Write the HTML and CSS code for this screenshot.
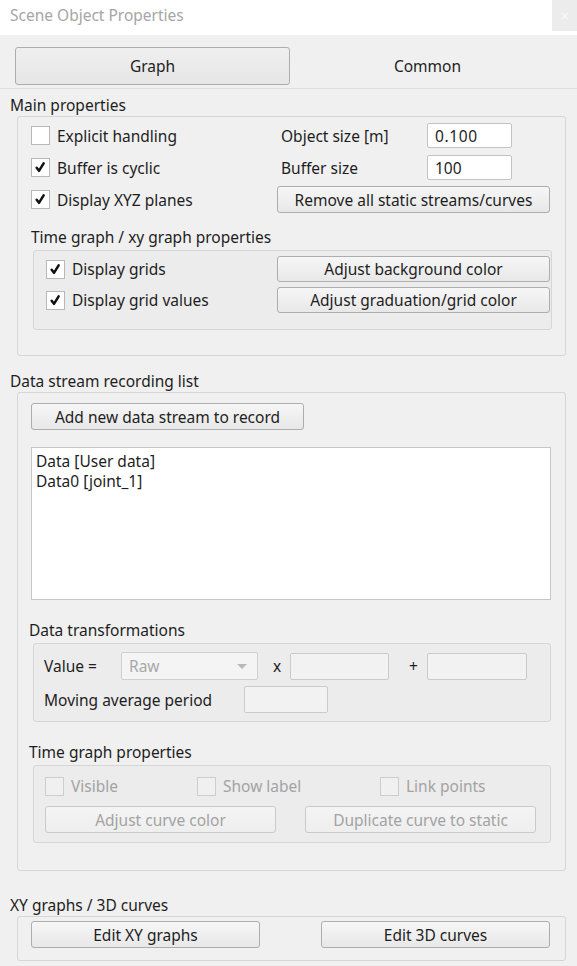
FILE: index.html
```html
<!DOCTYPE html>
<html lang="en">
<head>
<meta charset="utf-8">
<title>Scene Object Properties</title>
<link rel="stylesheet" href="styles.css">
</head>
<body>
<div class="dialog">
  <header class="titlebar">
    <span class="title">Scene Object Properties</span>
    <span class="close">✕</span>
  </header>

  <nav class="tabs">
    <div class="tab active">Graph</div>
    <div class="tab">Common</div>
  </nav>

  <main class="page">
    <div class="section-title first">Main properties</div>
    <section class="group main-props">
      <div class="prop-grid">
        <label class="check"><span class="box"></span>Explicit handling</label>
        <div class="field"><span class="field-label">Object size [m]</span><input class="edit w85 size-value" value="0.100"></div>

        <label class="check"><span class="box"><svg class="tick" viewBox="0 0 19 19" width="17" height="17"><path d="M5.2 9.8 L7.8 13.2 L13 4.8"/></svg></span>Buffer is cyclic</label>
        <div class="field"><span class="field-label">Buffer size</span><input class="edit w85" value="100"></div>

        <label class="check"><span class="box"><svg class="tick" viewBox="0 0 19 19" width="17" height="17"><path d="M5.2 9.8 L7.8 13.2 L13 4.8"/></svg></span>Display XYZ planes</label>
        <button class="btn w273">Remove all static streams/curves</button>
      </div>

      <div class="sub-title">Time graph / xy graph properties</div>
      <div class="group nested graph-props">
        <label class="check"><span class="box"><svg class="tick" viewBox="0 0 19 19" width="17" height="17"><path d="M5.2 9.8 L7.8 13.2 L13 4.8"/></svg></span>Display grids</label>
        <button class="btn w273">Adjust background color</button>
        <label class="check"><span class="box"><svg class="tick" viewBox="0 0 19 19" width="17" height="17"><path d="M5.2 9.8 L7.8 13.2 L13 4.8"/></svg></span>Display grid values</label>
        <button class="btn w273">Adjust graduation/grid color</button>
      </div>
    </section>

    <div class="section-title">Data stream recording list</div>
    <section class="group stream-list">
      <button class="btn w273">Add new data stream to record</button>
      <ul class="list">
        <li>Data [User data]</li>
        <li>Data0 [joint_1]</li>
      </ul>

      <div class="sub-title inset">Data transformations</div>
      <div class="group nested transform">
        <div class="row value-row">
          <span class="value-label">Value =</span>
          <div class="combo disabled"><span>Raw</span><span class="arrow"></span></div>
          <span class="op op-x">x</span>
          <input class="edit w99" disabled>
          <span class="op op-plus">+</span>
          <input class="edit w100" disabled>
        </div>
        <div class="row avg-row">
          <span class="avg-label">Moving average period</span>
          <input class="edit w84" disabled>
        </div>
      </div>

      <div class="sub-title inset">Time graph properties</div>
      <div class="group nested curve-props">
        <div class="row checks">
          <label class="check off c-visible"><span class="box"></span>Visible</label>
          <label class="check off c-label"><span class="box"></span>Show label</label>
          <label class="check off"><span class="box"></span>Link points</label>
        </div>
        <div class="row curve-buttons">
          <button class="btn w231" disabled>Adjust curve color</button>
          <button class="btn w231" disabled>Duplicate curve to static</button>
        </div>
      </div>
    </section>

    <div class="section-title">XY graphs / 3D curves</div>
    <section class="group xy-curves">
      <button class="btn w229">Edit XY graphs</button>
      <button class="btn w229">Edit 3D curves</button>
    </section>
  </main>
</div>
</body>
</html>
```

FILE: styles.css
```css
* {
  box-sizing: border-box;
}

html,
body {
  margin: 0;
  padding: 0;
}

body {
  width: 577px;
  height: 966px;
  overflow: hidden;
  background: #f0f0f0;
  font-family: "Noto Sans", "DejaVu Sans", sans-serif;
  font-size: 15.5px;
  color: #1e1e1e;
}

/* window caption */
.titlebar {
  height: 35px;
  background: #fff;
  display: flex;
  justify-content: space-between;
  align-items: flex-start;
}

.title {
  padding-left: 10px;
  line-height: 30px;
  color: #a6a6a6;
}

.close {
  width: 25px;
  height: 31px;
  background: #ececec;
  color: #fafafa;
  font-size: 11px;
  display: flex;
  align-items: center;
  justify-content: center;
}

/* tab strip */
.tabs {
  height: 54px;
  display: flex;
  padding: 12px 0 0 15px;
  border-bottom: 1px solid #dedede;
}

.tab {
  width: 275px;
  height: 38px;
  display: flex;
  align-items: center;
  justify-content: center;
}

.tab.active {
  border: 1px solid #adadad;
  border-radius: 3px;
  background: linear-gradient(#efefef, #e6e6e6);
}

/* page body */
.page {
  padding: 0 11px 0 17px;
}

.section-title {
  margin-left: -7px;
  height: 22px;
  line-height: 22px;
}

.section-title.first {
  margin-top: 5px;
}

.group {
  border: 1px solid #d6d6d6;
  border-radius: 3px;
}

.nested {
  background: #ececec;
}

.sub-title {
  height: 20px;
  line-height: 20px;
}

.sub-title.inset {
  margin-left: -2px;
}

/* controls */
.check {
  display: flex;
  align-items: center;
  gap: 7px;
  white-space: nowrap;
}

.box {
  width: 19px;
  height: 19px;
  flex: none;
  background: #fff;
  border: 1px solid #b8b8b8;
  display: flex;
  align-items: center;
  justify-content: center;
}

.tick path {
  fill: none;
  stroke: #111;
  stroke-width: 2.8;
  stroke-linecap: round;
  stroke-linejoin: round;
}

.check.off {
  color: #a3a3a3;
}

.check.off .box {
  background: #f0f0f0;
  border-color: #cdcdcd;
}

.btn {
  height: 27px;
  padding: 0;
  border: 1px solid #adadad;
  border-radius: 3px;
  background: linear-gradient(#f6f6f6, #e8e8e8);
  font: inherit;
  color: inherit;
}

.btn:disabled {
  border-color: #cacaca;
  background: linear-gradient(#f4f4f4, #eeeeee);
  color: #a3a3a3;
}

.w273 { width: 273px; }
.w231 { width: 231px; }
.w229 { width: 229px; }

.edit {
  height: 25px;
  padding: 0 7px;
  border: 1px solid #c3c3c3;
  border-radius: 2px;
  background: #fff;
  font: inherit;
  color: inherit;
  outline: none;
}

.edit:disabled {
  background: #f2f2f2;
  border-color: #cbcbcb;
}

.size-value {
  letter-spacing: 0.6px;
}

.w85 { width: 85px; }
.w99 { width: 99px; height: 27px; }
.w100 { width: 100px; height: 27px; }
.w84 { width: 84px; height: 27px; }

/* main properties */
.main-props {
  padding: 5px 15px 25px 13px;
  margin-bottom: 14px;
}

.prop-grid {
  display: grid;
  grid-template-columns: 246px 273px;
  grid-auto-rows: 27px;
  row-gap: 5px;
  align-items: center;
}

.field {
  display: flex;
  align-items: center;
}

.field-label {
  width: 150px;
  padding-left: 4px;
}

.main-props .sub-title {
  margin-top: 14px;
  margin-bottom: 3px;
}

.graph-props {
  margin: 0 -2px 0 2px;
  padding: 5px 1px 16px 12px;
  display: grid;
  grid-template-columns: 231px 273px;
  grid-auto-rows: 26px;
  row-gap: 5px;
  align-items: center;
}

.graph-props .btn {
  height: 26px;
}

/* data stream list */
.stream-list {
  padding: 10px 14px 27px 13px;
  margin-bottom: 23px;
}

.list {
  list-style: none;
  margin: 17px 0 0;
  height: 153px;
  padding: 3px 4px;
  background: #fff;
  border: 1px solid #c6c6c6;
  line-height: 20px;
}

.stream-list .sub-title {
  margin-top: 20px;
  margin-bottom: 3px;
}

.row {
  display: flex;
  align-items: center;
}

.transform {
  margin-left: 2px;
  padding: 8px 10px 8px 10px;
}

.value-row {
  height: 28px;
}

.value-label {
  width: 77px;
}

.combo {
  width: 137px;
  height: 28px;
  padding: 0 10px 0 7px;
  border: 1px solid #d0d0d0;
  border-radius: 2px;
  background: #f4f4f4;
  color: #a8a8a8;
  display: flex;
  align-items: center;
  justify-content: space-between;
}

.arrow {
  width: 0;
  height: 0;
  border-left: 5px solid transparent;
  border-right: 5px solid transparent;
  border-top: 5px solid #b9b9b9;
}

.op {
  flex: none;
}

.op-x {
  width: 32px;
  padding-left: 15px;
}

.op-plus {
  width: 38px;
  padding-left: 20px;
}

.avg-row {
  height: 27px;
  margin-top: 6px;
}

.avg-label {
  width: 200px;
}

.stream-list .sub-title + .curve-props {
  margin-top: 1px;
}

.curve-props {
  margin-left: 2px;
  padding: 9px 10px 9px 11px;
}

.checks {
  height: 22px;
}

.c-visible { width: 152px; }
.c-label { width: 183px; }

.curve-buttons {
  margin-top: 9px;
  gap: 29px;
}

/* XY graphs / 3D curves */
.xy-curves {
  padding: 4px 15px 12px 13px;
  display: flex;
  justify-content: space-between;
}
```
